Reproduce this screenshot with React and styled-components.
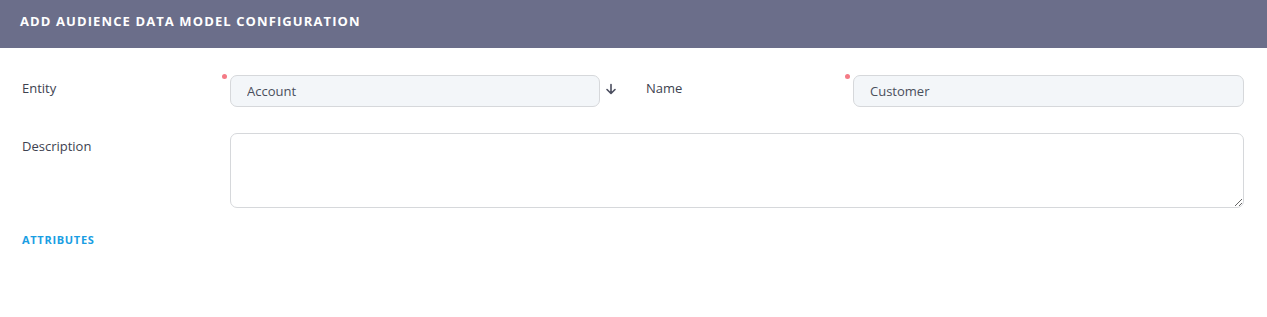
import React from "react";
import styled, { createGlobalStyle } from "styled-components";

const palette = {
  header: "#6b6e8a",
  white: "#ffffff",
  text: "#3d4250",
  inputBg: "#f3f6f9",
  border: "#d6d8db",
  required: "#f47b86",
  link: "#1a9ee3",
};

const GlobalStyle = createGlobalStyle`
  body {
    margin: 0;
    background: ${palette.white};
    font-family: "Open Sans", "Liberation Sans", sans-serif;
  }
`;

export default function App() {
  return (
    <>
      <GlobalStyle />
      <Panel>
        <Header>
          <h2>Add Audience Data Model Configuration</h2>
        </Header>
        <Body>
          <Row>
            <Field $width="595px">
              <Label $width="208px">Entity</Label>
              <InputWrap required>
                <Input readOnly value="Account" />
              </InputWrap>
              <SortIcon viewBox="0 0 12 12" aria-hidden="true">
                <path d="M6 1.5v8.5M2 6.5l4 4 4-4" />
              </SortIcon>
            </Field>
            <Field $width="598px">
              <Label $width="207px">Name</Label>
              <InputWrap required>
                <Input readOnly value="Customer" />
              </InputWrap>
            </Field>
          </Row>
          <Row>
            <Field $width="100%">
              <Label $width="208px">Description</Label>
              <InputWrap>
                <TextArea />
              </InputWrap>
            </Field>
          </Row>
          <SectionTitle>Attributes</SectionTitle>
        </Body>
      </Panel>
    </>
  );
}

const Panel = styled.div`
  width: 100%;
`;

const Header = styled.div`
  height: 48px;
  padding: 0 20px;
  display: flex;
  align-items: center;
  background-color: ${palette.header};
  h2 {
    margin: 0;
    margin-top: -6px;
    color: ${palette.white};
    font-size: 13px;
    font-weight: 700;
    letter-spacing: 1.1px;
    text-transform: uppercase;
  }
`;

const Body = styled.div`
  padding: 27px 23px 0 22px;
`;

const Row = styled.div`
  display: flex;
  justify-content: space-between;
  margin-bottom: 26px;
`;

const Field = styled.div`
  width: ${(p) => p.$width};
  display: flex;
  align-items: flex-start;
`;

const Label = styled.label`
  flex: 0 0 ${(p) => p.$width};
  margin-top: 4px;
  color: ${palette.text};
  font-size: 13px;
  line-height: 18px;
`;

const InputWrap = styled.div`
  flex: 1;
  position: relative;
  ${(p) =>
    p.required &&
    `
    &::before {
      content: "";
      position: absolute;
      top: -1px;
      left: -8px;
      width: 5px;
      height: 5px;
      border-radius: 50%;
      background-color: ${palette.required};
    }
  `}
`;

const Input = styled.input`
  box-sizing: border-box;
  display: block;
  width: 100%;
  height: 32px;
  padding: 0 16px;
  border: 1px solid ${palette.border};
  border-radius: 7px;
  background-color: ${palette.inputBg};
  color: #4a4f5c;
  font-family: inherit;
  font-size: 13px;
  outline: none;
`;

const TextArea = styled.textarea`
  box-sizing: border-box;
  display: block;
  width: 100%;
  height: 75px;
  padding: 8px 16px;
  border: 1px solid ${palette.border};
  border-radius: 7px;
  background-color: ${palette.white};
  font-family: inherit;
  font-size: 13px;
  outline: none;
`;

const SortIcon = styled.svg`
  flex: 0 0 12px;
  width: 12px;
  height: 12px;
  margin: 8px 0 0 5px;
  fill: none;
  stroke: #4a4d5e;
  stroke-width: 1.6;
  stroke-linecap: round;
  stroke-linejoin: round;
`;

const SectionTitle = styled.h3`
  margin: -2px 0 0;
  color: ${palette.link};
  font-size: 11px;
  font-weight: 700;
  letter-spacing: 0.7px;
  text-transform: uppercase;
`;
